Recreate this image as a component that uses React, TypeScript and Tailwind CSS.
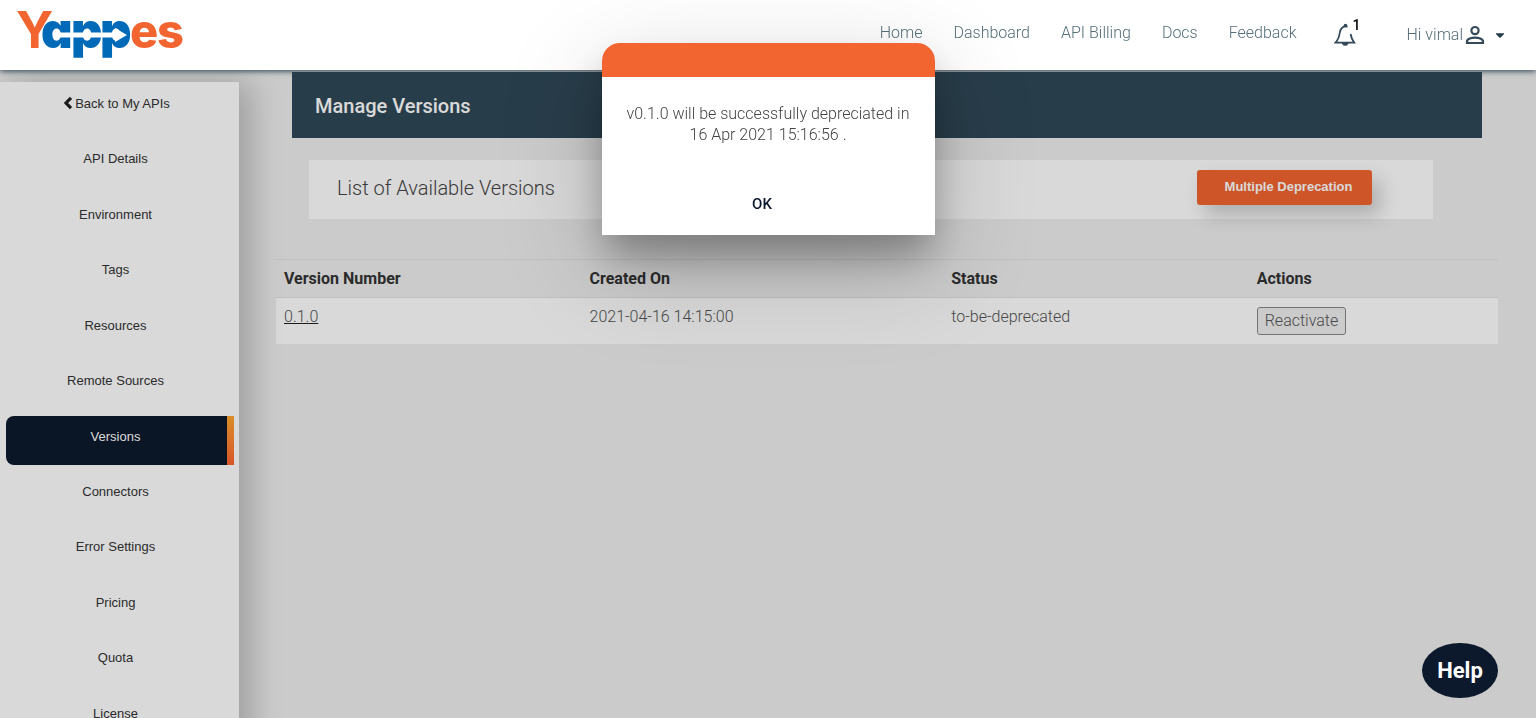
import { FaCaretDown } from "react-icons/fa";

const navLinks = ["Home", "Dashboard", "API Billing", "Docs", "Feedback"];

const sections = [
  "API Details",
  "Environment",
  "Tags",
  "Resources",
  "Remote Sources",
  "Versions",
  "Connectors",
  "Error Settings",
  "Pricing",
  "Quota",
  "License",
];

const versions = [
  { number: "0.1.0", created: "2021-04-16 14:15:00", status: "to-be-deprecated" },
];

function Logo() {
  return (
    <svg viewBox="0 0 172 70" className="h-[70px] w-[172px] overflow-visible" role="img" aria-label="Yappes">
      <g className="[font-family:Inter,sans-serif] [font-feature-settings:'cv11']" fontWeight="800">
        <text x="0" y="48" fontSize="51" fill="#f26430" fontWeight="700">Y</text>
        <text x="25 55 84" y="48" fontSize="49" fill="#0069b8" fontWeight="900">app</text>
        <text x="114 141" y="48" fontSize="47" fill="#f26430">es</text>
      </g>
      <path d="M40 32.500H99V28L111 35L99 42V37.500H40Z" fill="#fff" />
    </svg>
  );
}

function BellIcon() {
  return (
    <svg viewBox="0 0 22 24" className="h-6 w-[22px]" fill="none" stroke="#34495a" strokeWidth="1.800" aria-hidden="true">
      <path d="M13.500 3.600C9.500 2.600 6.600 5 5.900 9C5.300 13.500 4.500 16.500 1.500 19.600H20.200C18.600 17.500 17.300 15.500 16.600 11" />
      <circle cx="11.500" cy="2.600" r="0.900" fill="#34495a" />
      <path d="M9 20.500A2.400 2.200 0 0 0 13.400 20.500Z" fill="#34495a" />
    </svg>
  );
}

function UserIcon() {
  return (
    <svg viewBox="0 0 20 20" className="h-5 w-5" fill="none" stroke="#34495a" strokeWidth="2.200" aria-hidden="true">
      <circle cx="10" cy="5.600" r="3.600" />
      <path d="M2 18V16.500C2 13.800 6.500 12.600 10 12.600S18 13.800 18 16.500V18Z" />
    </svg>
  );
}

function BackIcon() {
  return (
    <svg viewBox="0 0 10 14" className="mt-0.5 h-3.5 w-2.5" fill="none" stroke="#222" strokeWidth="3.200" aria-hidden="true">
      <path d="M8 1.800L3 7L8 12.200" />
    </svg>
  );
}

function Header() {
  return (
    <header className="relative z-20 flex h-[70px] shrink-0 items-start justify-between bg-white pr-[29px] pl-4 shadow-[0_1px_6px_#283d4a]">
      <a href="#home">
        <Logo />
      </a>
      <nav className="flex items-start pt-[23px] text-[16px] leading-5 font-light text-[#546e7a]">
        <div className="flex gap-[31px]">
          {navLinks.map((label) => (
            <a key={label} href={"#" + label}>
              {label}
            </a>
          ))}
        </div>
        <button type="button" aria-label="Notifications" className="relative ml-[37px]">
          <BellIcon />
          <span className="absolute -top-2 left-[19px] text-[14px] leading-5 font-medium text-black">1</span>
        </button>
        <button type="button" className="ml-[51px] flex items-center gap-0.5 pt-0.5">
          Hi vimal
          <UserIcon />
          <FaCaretDown className="ml-1.5 size-3.5 text-[#283d4a]" />
        </button>
      </nav>
    </header>
  );
}

function Sidebar() {
  return (
    <aside className="relative mt-3 w-[239px] shrink-0 self-start bg-white pt-px pr-[5px] pb-10 pl-1.5 text-[13px] leading-5 text-[#333] shadow-[12px_0_30px_rgba(0,0,0,0.22)] [font-family:'Liberation_Sans',sans-serif]">
      <nav className="grid h-[665px] auto-rows-fr text-center">
        <a href="#apis" className="flex h-[49px] items-start justify-center gap-0.5 pt-[11px] pr-[7px]">
          <BackIcon />
          Back to My APIs
        </a>
        {sections.map((label) =>
          label === "Versions" ? (
            <a
              key={label}
              href="#versions"
              aria-current="page"
              className="flex h-[49px] overflow-hidden rounded-l-lg bg-[#0c192c] text-white"
            >
              <span className="flex-1 pt-[11px] pr-0.5">{label}</span>
              <span className="w-[7px] bg-linear-to-b from-[#ffa62e] to-[#ff6430]" />
            </a>
          ) : (
            <a key={label} href={"#" + label} className="block h-[49px] pt-[11px] pr-[9px]">
              {label}
            </a>
          ),
        )}
      </nav>
    </aside>
  );
}

function VersionTable() {
  return (
    <table className="mt-10 w-full table-fixed border-collapse text-left text-[16px] leading-5">
      <thead className="border-y border-[#dee2e6] text-[#333]">
        <tr className="h-[38px]">
          <th className="w-[25%] px-2 font-bold">Version Number</th>
          <th className="w-[29.6%] px-2 font-bold">Created On</th>
          <th className="w-[25%] px-2 font-bold">Status</th>
          <th className="w-[20.4%] px-2 font-bold">Actions</th>
        </tr>
      </thead>
      <tbody className="font-light text-[#555]">
        {versions.map((v) => (
          <tr key={v.number} className="h-[46px] bg-white align-top">
            <td className="px-2 pt-[9px]">
              <a href="#version" className="underline decoration-[#222]">{v.number}</a>
            </td>
            <td className="px-2 pt-[9px]">{v.created}</td>
            <td className="px-2 pt-[9px]">{v.status}</td>
            <td className="px-2 pt-[9px]">
              <button type="button" className="block h-7 rounded-[3px] border border-[#888] bg-[#efefef] px-[7px]">
                Reactivate
              </button>
            </td>
          </tr>
        ))}
      </tbody>
    </table>
  );
}

function Dialog() {
  return (
    <div className="fixed inset-x-0 top-[43px] z-30 flex justify-center">
      <div
        role="dialog"
        aria-modal="true"
        aria-labelledby="dialog-text"
        className="w-[333px] overflow-hidden rounded-t-[18px] bg-white text-center shadow-[0_24px_38px_-4px_rgba(0,0,0,0.3),0_30px_100px_4px_rgba(0,0,0,0.18)]"
      >
        <div className="h-[34px] bg-[#f26430]" />
        <p id="dialog-text" className="px-6 pt-[26px] text-[16px] leading-[21px] font-light text-[#444]">
          v0.1.0 will be successfully depreciated in 16 Apr 2021 15:16:56 .
        </p>
        <button type="button" className="mt-[39px] mr-3 mb-[11px] h-10 px-4 text-[15px] font-medium text-[#0c192c]">
          OK
        </button>
      </div>
    </div>
  );
}

export default function App() {
  return (
    <div className="flex h-screen flex-col overflow-hidden bg-[#efefef] [font-family:Roboto,sans-serif]">
      <Header />
      <div className="flex min-h-0 flex-1">
        <Sidebar />
        <main className="min-w-0 flex-1 pt-0.5 pr-[38px] pl-[37px]">
          <h1 className="mx-4 flex h-[66px] items-center bg-[#2f4857] px-[23px] pt-0.5 text-[20px] font-medium text-white">
            Manage Versions
          </h1>
          <div className="mt-[22px] mr-[65px] ml-[33px] flex h-[59px] items-start justify-between bg-white pr-[61px] pl-7">
            <h2 className="pt-4 text-[20px] leading-6 font-light text-[#444]">List of Available Versions</h2>
            <button
              type="button"
              className="mt-[10px] h-[35px] w-[175px] rounded-[3px] bg-[#f26430] pb-0.5 pl-2 text-[13px] font-bold text-white shadow-[8px_10px_20px_rgba(0,0,0,0.2)] [font-family:'Liberation_Sans',sans-serif]"
            >
              Multiple Deprecation
            </button>
          </div>
          <VersionTable />
        </main>
      </div>
      <div className="fixed inset-0 z-10 bg-black/15" />
      <button
        type="button"
        className="fixed right-[38px] bottom-5 z-20 h-[55px] w-[76px] rounded-[50%] bg-[#0c192c] text-[22px] font-bold text-white"
      >
        Help
      </button>
      <Dialog />
    </div>
  );
}
